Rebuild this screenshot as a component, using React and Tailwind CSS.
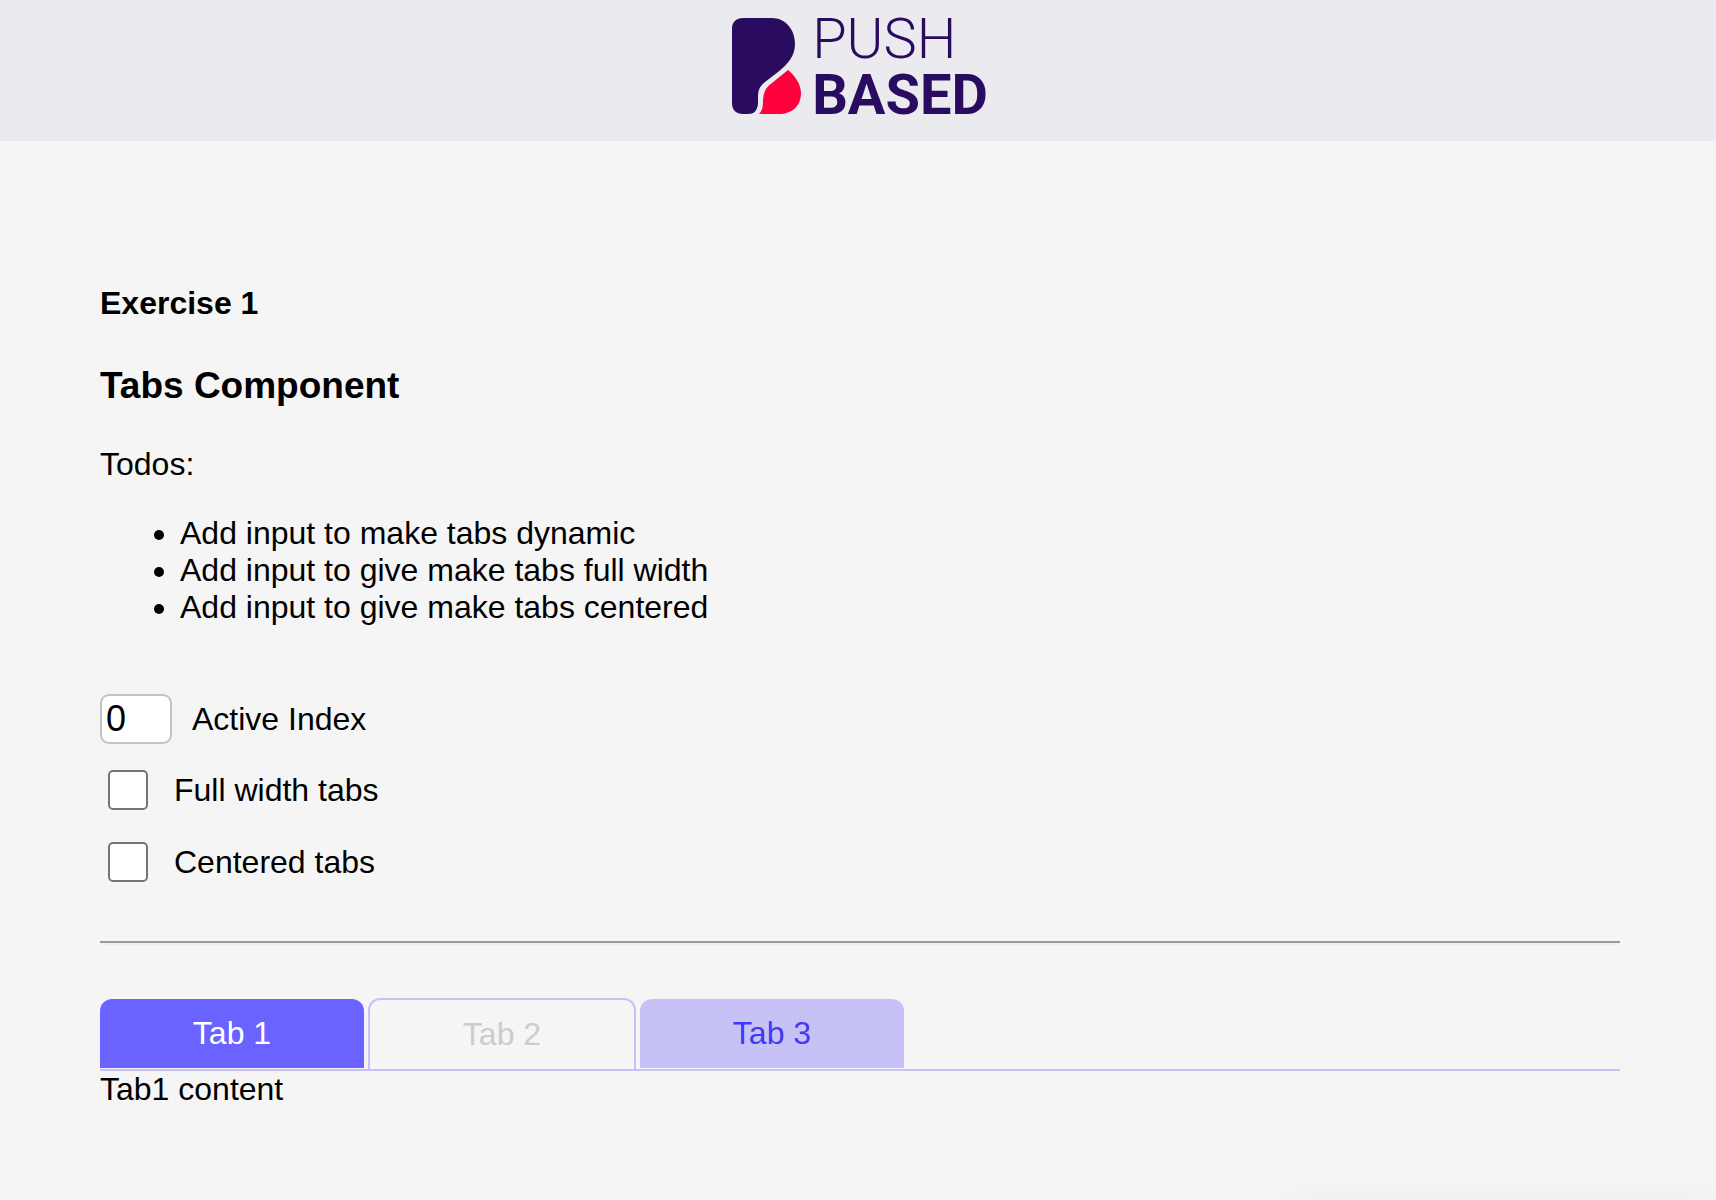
import { useState } from "react";

function Logo() {
  return (
    <div className="flex h-24 items-start gap-[10px] text-[#290c60]">
      <svg aria-hidden="true" className="block h-24 w-[70px]" viewBox="0 0 70 96" fill="#290c60">
        <path d="M11 0H40C53 0 63 11 63 26C63 38 56 46 46 54L33 64C27 69 26 73 26 80V86C25 93 22 96 16 96H11C4 96 0 92 0 85V11C0 4 4 0 11 0Z" />
        <path
          d="M56 52C63 58 69 66 69 75C69 88 60 96 47 96H27C31 92 31 87 31 82C32 74 33 70 40 65Z"
          fill="#ff003c"
        />
      </svg>
      <div className="-mt-[7px] font-[Roboto,sans-serif] text-[56px] leading-14">
        <div className="font-light">PUSH</div>
        <div className="font-bold">BASED</div>
      </div>
    </div>
  );
}

function CheckRow({ id, label, checked, onChange }) {
  return (
    <div className="flex items-center gap-[26px] pl-2">
      <input
        id={id}
        type="checkbox"
        checked={checked}
        onChange={(e) => onChange(e.target.checked)}
        className="size-10 appearance-none rounded-[5px] border-2 border-[#767676] bg-white checked:bg-[#6a63ff]"
      />
      <label htmlFor={id}>{label}</label>
    </div>
  );
}

const tabs = [
  { label: "Tab 1", content: "Tab1 content" },
  { label: "Tab 2", content: "Tab2 content", disabled: true },
  { label: "Tab 3", content: "Tab3 content" },
];

function tabStyle(tab, active) {
  if (tab.disabled)
    return "h-[71px] w-[268px] border-2 border-b-0 border-[#c7c2f6] text-[#cccccc]";
  if (active) return "mb-px h-[69px] w-[264px] bg-[#6a63ff] text-white";
  return "mb-px h-[69px] w-[264px] bg-[#c7c2f6] text-[#4538f5]";
}

export default function App() {
  const [index, setIndex] = useState(0);
  const [full, setFull] = useState(false);
  const [centered, setCentered] = useState(false);

  return (
    <div className="min-h-screen bg-[#f5f5f5] font-['Liberation_Sans',Arial,sans-serif] text-[32px] leading-[37px] text-black">
      <header className="flex justify-center bg-[#ebeaef] pt-[18px] pb-[27px] pl-1">
        <Logo />
      </header>

      <main className="pt-36 pr-24 pb-16 pl-25">
        <h4 className="font-bold">Exercise 1</h4>
        <h3 className="mt-[42px] text-[37px] leading-[43px] font-bold">Tabs Component</h3>
        <p className="mt-[39px]">Todos:</p>
        <ul className="mt-8 list-disc pl-20">
          <li>Add input to make tabs dynamic</li>
          <li>Add input to give make tabs full width</li>
          <li>Add input to give make tabs centered</li>
        </ul>

        <div className="mt-[68px] flex items-center gap-5">
          <input
            id="active-index"
            type="number"
            min="0"
            max="2"
            value={index}
            onChange={(e) => setIndex(Number(e.target.value))}
            className="h-[50px] w-[72px] [appearance:textfield] rounded-[9px] border-2 border-[#c3c3c3] bg-white pl-1 text-[36px]"
          />
          <label htmlFor="active-index">Active Index</label>
        </div>
        <div className="mt-[26px] flex flex-col gap-8">
          <CheckRow id="full" label="Full width tabs" checked={full} onChange={setFull} />
          <CheckRow id="centered" label="Centered tabs" checked={centered} onChange={setCentered} />
        </div>

        <hr className="mt-[59px] h-1 border-t-2 border-b-2 border-t-[#9a9a9a] border-b-[#eeeeee]" />

        <div
          role="tablist"
          className={`mt-[53px] flex items-end gap-1 border-b-2 border-[#c7c2f6] ${centered ? "justify-center" : ""}`}
        >
          {tabs.map((tab, i) => (
            <button
              key={tab.label}
              role="tab"
              type="button"
              disabled={tab.disabled}
              aria-selected={i === index}
              onClick={() => setIndex(i)}
              className={`rounded-t-xl ${full ? "grow" : ""} ${tabStyle(tab, i === index)}`}
            >
              {tab.label}
            </button>
          ))}
        </div>
        <div role="tabpanel">{tabs[index]?.content}</div>
      </main>

      <div className="pointer-events-none fixed top-full right-0 left-3/4 h-16 shadow-[0_0_40px_rgba(0,0,0,0.04)]" />
    </div>
  );
}
